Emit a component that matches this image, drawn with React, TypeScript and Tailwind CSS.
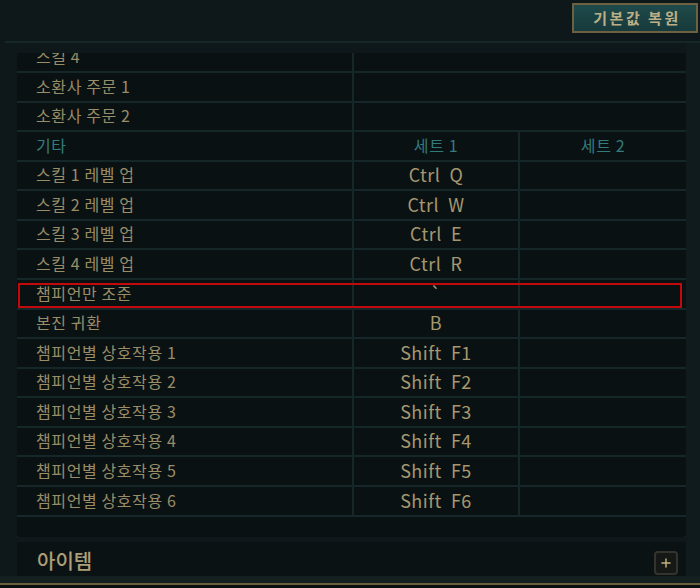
import { Plus } from "lucide-react";

// row heights alternate so the 29.6px pitch of the reference stays on whole pixels
const H27 = "h-[27px]";
const H28 = "h-[28px]";

const twoCol = [
  { label: "소환사 주문 1", h: H28 },
  { label: "소환사 주문 2", h: H27 },
];

const rows: { label: string; key: string; h: string; marked?: boolean }[] = [
  { label: "스킬 1 레벨 업", key: "Ctrl  Q", h: H27 },
  { label: "스킬 2 레벨 업", key: "Ctrl  W", h: H28 },
  { label: "스킬 3 레벨 업", key: "Ctrl  E", h: H27 },
  { label: "스킬 4 레벨 업", key: "Ctrl  R", h: H28 },
  { label: "챔피언만 조준", key: "`", h: H28, marked: true },
  { label: "본진 귀환", key: "B", h: H27 },
  { label: "챔피언별 상호작용 1", key: "Shift  F1", h: H28 },
  { label: "챔피언별 상호작용 2", key: "Shift  F2", h: H27 },
  { label: "챔피언별 상호작용 3", key: "Shift  F3", h: H28 },
  { label: "챔피언별 상호작용 4", key: "Shift  F4", h: H27 },
  { label: "챔피언별 상호작용 5", key: "Shift  F5", h: H28 },
  { label: "챔피언별 상호작용 6", key: "Shift  F6", h: H28 },
];

const font = "font-['Noto_Sans_CJK_KR','Noto_Sans',sans-serif]";
const cell = "bg-[#0a1113] pb-[3px] leading-[20px] flex items-center";
const label = "pl-[19px] text-[16px] tracking-[0.6px] text-[#998d67]";

export default function App() {
  return (
    <div className={`w-[700px] h-[588px] bg-[#0e171a] overflow-hidden flex flex-col ${font}`}>
      {/* top bar */}
      <div className="h-[41px] flex justify-end items-start pt-[3px] pr-[2px]">
        <button className="w-[126px] h-[30px] border-2 border-[#6e6142] bg-gradient-to-b from-[#1f4a4b] to-[#173a3b] text-[#bcae86] text-[15px] font-bold tracking-[2.5px] pl-[4px] flex items-center justify-center whitespace-pre">
          기본값 복원
        </button>
      </div>
      <div className="h-[2px] ml-[5px] bg-[#152729]" />

      {/* body */}
      <div className="flex flex-1 min-h-0">
        <div className="w-[686px] flex flex-col pl-[17px] pt-[10px]">
          <div className="h-[485px] overflow-hidden flex flex-col gap-[2px] bg-[#152729]">
            {/* row scrolled half out of view */}
            <div className="h-[18px] shrink-0 grid grid-cols-[335px_1fr] gap-x-[2px] overflow-hidden">
              <div className={`${cell} ${label} -mt-[10px] h-[28px]`}>스킬 4</div>
              <div className="bg-[#0a1113]" />
            </div>
            {twoCol.map((t) => (
              <div key={t.label} className={`${t.h} shrink-0 grid grid-cols-[335px_1fr] gap-x-[2px]`}>
                <div className={`${cell} ${label}`}>{t.label}</div>
                <div className="bg-[#0a1113]" />
              </div>
            ))}
            {/* header */}
            <div className="h-[28px] shrink-0 grid grid-cols-[335px_164px_1fr] gap-x-[2px] text-[16px] tracking-[0.6px] text-[#347b7d]">
              <div className={`${cell} pl-[19px]`}>기타</div>
              <div className={`${cell} justify-center`}>세트 1</div>
              <div className={`${cell} justify-center`}>세트 2</div>
            </div>
            {rows.map((r) => (
              <div key={r.label} className={`relative ${r.h} shrink-0 grid grid-cols-[335px_164px_1fr] gap-x-[2px]`}>
                <div className={`${cell} ${label}`}>{r.label}</div>
                <div className={`${cell} justify-center text-[18px] tracking-[0.5px] text-[#a5986f] whitespace-pre`}>
                  {r.key}
                </div>
                <div className="bg-[#0a1113]" />
                {r.marked && (
                  <div className="absolute left-[1px] right-[4px] top-[3px] h-[25px] border-2 border-[#c4090d]" />
                )}
              </div>
            ))}
            <div className="flex-1 bg-[#0a1113] rounded-b-[3px]" />
          </div>
          <div className="h-[5px] bg-[#0f191b]" />
          {/* items section */}
          <div className="h-[34px] bg-[#0b1214] rounded-t-[3px] flex items-center justify-between pl-[20px] pr-[8px]">
            <span className="text-[20px] font-medium text-[#ad9f77] mt-[4px]">아이템</span>
            <div className="w-[24px] h-[24px] mt-[8px] rounded-[4px] border-2 border-[#34342f] bg-[#151815] flex items-center justify-center">
              <Plus size={14} strokeWidth={2.5} className="text-[#c2b27c]" />
            </div>
          </div>
        </div>
        <div className="w-[14px] bg-[#101b1d]" />
      </div>

      <div className="h-[7px] bg-[#13201f]" />
      <div className="h-[2px] bg-[#6b5e3b]" />
      <div className="h-[3px] bg-[#0a0f10]" />
    </div>
  );
}
